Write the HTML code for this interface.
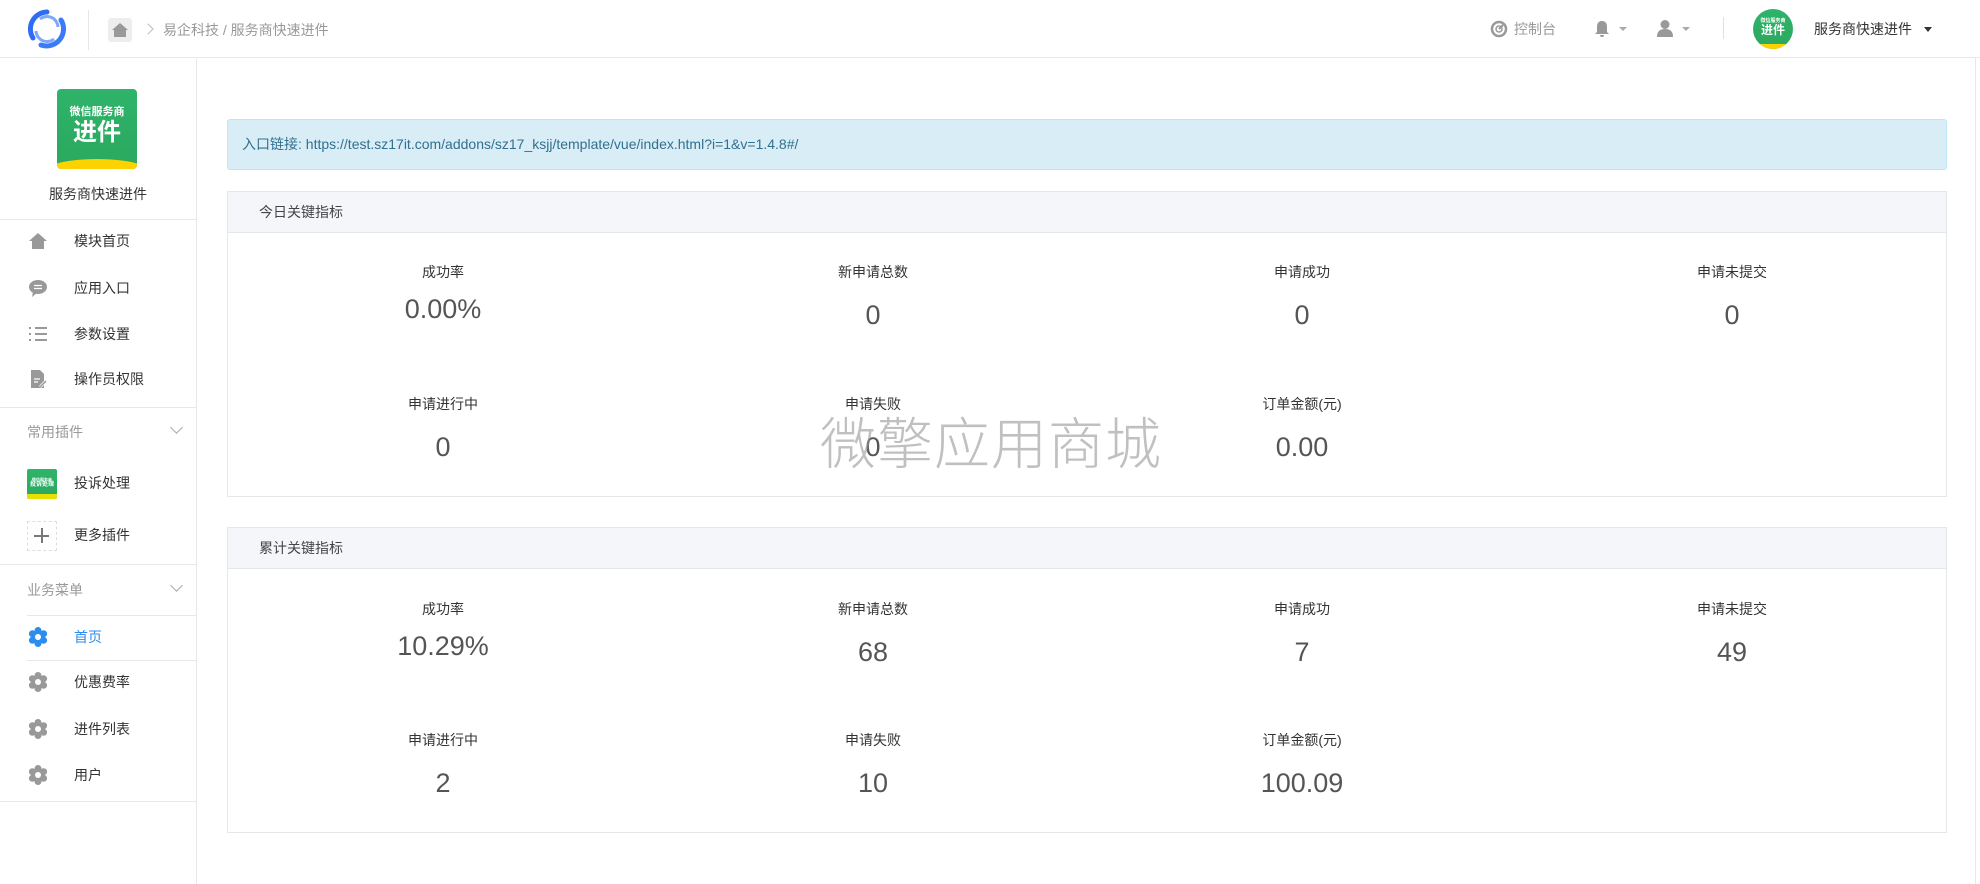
<!DOCTYPE html>
<html><head><meta charset="utf-8">
<style>
*{box-sizing:border-box;margin:0;padding:0}
body{width:1980px;height:884px;overflow:hidden;background:#fff;font-family:"Liberation Sans","Noto Sans CJK SC",sans-serif;color:#333;position:relative}
.abs{position:absolute}
.hdr{left:0;top:0;width:1980px;height:58px;border-bottom:1px solid #e8e8e8;background:#fff}
.side{left:0;top:59px;width:197px;height:825px;border-right:1px solid #e8e8e8}
.hl{position:absolute;height:1px;background:#e8e8e8}
.mi{position:absolute;left:0;width:196px;height:30px;font-size:14px;line-height:30px}
.mi .t{position:absolute;left:74px;top:0}
.mi svg{position:absolute;left:28px;top:5px}
.grp{position:absolute;left:27px;font-size:14px;color:#999}
.chev{position:absolute;left:172px;width:9px;height:9px;border-right:1px solid #aaa;border-bottom:1px solid #aaa;transform:rotate(45deg)}
.alert{left:227px;top:119px;width:1720px;height:51px;background:#d9edf7;border:1px solid #bce8f1;border-radius:3px;color:#31708f;font-size:14px;line-height:49px;padding-left:14px}
.panel{left:227px;width:1720px;border:1px solid #e5e6ea;background:#fff}
.ph{height:41px;background:#f5f6fa;border-bottom:1px solid #e5e6ea;font-size:14px;line-height:40px;padding-left:31px;color:#444}
.m{position:absolute;width:300px;margin-left:-150px;text-align:center}
.m .l{font-size:14px;color:#333;height:20px;line-height:20px}
.m .v{font-size:27px;color:#555;margin-top:16px;line-height:34px}
.badge{position:absolute;background:linear-gradient(#2fb36a,#2aa85e);color:#fff;text-align:center;font-weight:bold;overflow:hidden}
</style></head><body>

<div class="abs hdr">
  <svg class="abs" style="left:27px;top:9px" width="40" height="40" viewBox="0 0 40 40">
    <path d="M20 3 A17 17 0 0 0 6 29" stroke="#2f6df5" stroke-width="5" fill="none" stroke-linecap="round"/>
    <path d="M34 11 A17 17 0 0 1 14 36" stroke="#3b7bf7" stroke-width="5" fill="none" stroke-linecap="round"/>
    <path d="M13 10 A11 11 0 0 1 31 18" stroke="#7ea8fa" stroke-width="3" fill="none"/>
    <path d="M27 30 A11 11 0 0 1 9 22" stroke="#7ea8fa" stroke-width="3" fill="none"/>
  </svg>
  <div class="abs" style="left:88px;top:10px;width:1px;height:40px;background:#e6e6e6"></div>
  <div class="abs" style="left:108px;top:18px;width:24px;height:24px;background:#ededed;border-radius:3px"></div>
  <svg class="abs" style="left:111px;top:21px" width="18" height="18" viewBox="0 0 18 18"><path d="M9 2 L17 9 L15 9 L15 16 L3 16 L3 9 L1 9Z" fill="#999"/></svg>
  <div class="abs" style="left:144px;top:25px;width:8px;height:8px;border-top:1px solid #bbb;border-right:1px solid #bbb;transform:rotate(45deg)"></div>
  <div class="abs" style="left:163px;top:20px;font-size:14px;color:#999">易企科技 / 服务商快速进件</div>

  <svg class="abs" style="left:1490px;top:20px" width="18" height="18" viewBox="0 0 18 18"><circle cx="9" cy="9" r="7" stroke="#999" stroke-width="2.5" fill="none"/><circle cx="9" cy="9" r="3" stroke="#999" stroke-width="1.5" fill="none"/><path d="M9 9 L13 5" stroke="#999" stroke-width="2"/></svg>
  <div class="abs" style="left:1514px;top:19px;font-size:14px;color:#999">控制台</div>
  <svg class="abs" style="left:1594px;top:20px" width="16" height="18" viewBox="0 0 16 18"><path d="M8 1 C4 1 3 4 3 7 L3 12 L1 14 L15 14 L13 12 L13 7 C13 4 12 1 8 1Z M6 15 A2 2 0 0 0 10 15Z" fill="#999"/></svg>
  <div class="abs" style="left:1619px;top:27px;border-left:4px solid transparent;border-right:4px solid transparent;border-top:4px solid #aaa"></div>
  <svg class="abs" style="left:1656px;top:19px" width="18" height="19" viewBox="0 0 18 19"><circle cx="9" cy="5.5" r="4.5" fill="#999"/><path d="M1 18 C1 12 4 10 9 10 C14 10 17 12 17 18Z" fill="#999"/></svg>
  <div class="abs" style="left:1682px;top:27px;border-left:4px solid transparent;border-right:4px solid transparent;border-top:4px solid #aaa"></div>
  <div class="abs" style="left:1723px;top:17px;width:1px;height:22px;background:#e0e0e0"></div>
  <div class="badge" style="left:1753px;top:9px;width:40px;height:40px;border-radius:50%">
    <div style="font-size:5px;margin-top:9px;line-height:6px">微信服务商</div>
    <div style="font-size:12px;line-height:13px">进件</div>
    <div style="position:absolute;left:0;bottom:0;width:40px;height:5px;background:#fcd200"></div>
  </div>
  <div class="abs" style="left:1814px;top:19px;font-size:14px;color:#333">服务商快速进件</div>
  <div class="abs" style="left:1924px;top:27px;border-left:4.5px solid transparent;border-right:4.5px solid transparent;border-top:5px solid #333"></div>
</div>
<div class="abs" style="left:1975px;top:58px;width:1px;height:826px;background:#e8e8e8"></div>

<div class="abs side">
  <div class="badge" style="left:57px;top:30px;width:80px;height:80px;border-radius:4px">
    <div style="font-size:11px;margin-top:17px;line-height:13px">微信服务商</div>
    <div style="font-size:24px;line-height:28px">进件</div>
    <div style="position:absolute;left:-10px;bottom:-12px;width:100px;height:22px;border-radius:50%;background:#fcd200"></div>
  </div>
  <div class="abs" style="left:0;top:125px;width:196px;text-align:center;font-size:14px">服务商快速进件</div>
  <div class="hl" style="left:0;top:160px;width:196px"></div>

  <div class="mi" style="top:167px"><svg width="20" height="20" viewBox="0 0 20 20"><path d="M10 2 L19 10 L16 10 L16 18 L4 18 L4 10 L1 10Z" fill="#999"/></svg><span class="t">模块首页</span></div>
  <div class="mi" style="top:214px"><svg width="20" height="20" viewBox="0 0 20 20"><ellipse cx="10" cy="9" rx="9" ry="7" fill="#999"/><path d="M5 14 L4 19 L9 15Z" fill="#999"/><path d="M6 7.5 H14 M6 10.5 H14" stroke="#fff" stroke-width="1.3"/></svg><span class="t">应用入口</span></div>
  <div class="mi" style="top:260px"><svg width="20" height="20" viewBox="0 0 20 20"><path d="M1 4 H3 M7 4 H19 M1 10 H3 M7 10 H19 M1 16 H3 M7 16 H19" stroke="#999" stroke-width="2"/></svg><span class="t">参数设置</span></div>
  <div class="mi" style="top:305px"><svg width="20" height="20" viewBox="0 0 20 20"><path d="M3 1 H12 L16 5 L16 19 L3 19Z" fill="#999"/><path d="M6 10 H12 M6 13 H10" stroke="#fff" stroke-width="1.3"/><path d="M12 18 L18 12" stroke="#fff" stroke-width="3"/><path d="M12 18 L18 12" stroke="#999" stroke-width="1.5"/></svg><span class="t">操作员权限</span></div>
  <div class="hl" style="left:0;top:348px;width:196px"></div>

  <div class="grp" style="top:363px">常用插件</div><div class="chev" style="top:364px"></div>
  <div class="badge" style="left:27px;top:410px;width:30px;height:30px;border-radius:2px"><div style="font-size:4px;margin-top:8px;line-height:5px">微信服务商</div><div style="font-size:6px;line-height:7px">投诉处理</div><div style="position:absolute;left:0;bottom:0;width:30px;height:5px;background:#e8e000"></div></div>
  <div class="abs" style="left:74px;top:414px;font-size:14px">投诉处理</div>
  <div class="abs" style="left:27px;top:462px;width:30px;height:30px;border:1px dashed #ddd"></div>
  <div class="abs" style="left:34px;top:476px;width:15px;height:1.5px;background:#777"></div>
  <div class="abs" style="left:41px;top:469px;width:1.5px;height:15px;background:#777"></div>
  <div class="abs" style="left:74px;top:466px;font-size:14px">更多插件</div>
  <div class="hl" style="left:0;top:505px;width:196px"></div>

  <div class="grp" style="top:521px">业务菜单</div><div class="chev" style="top:522px"></div>
  <div class="hl" style="left:27px;top:556px;width:169px"></div>
  <div class="mi" style="top:563px;color:#2d8cf0"><svg width="20" height="20" viewBox="0 0 20 20"><g fill="#2d8cf0"><circle cx="10" cy="10" r="7"/><circle cx="10" cy="3.5" r="3.5"/><circle cx="10" cy="16.5" r="3.5"/><circle cx="4.4" cy="6.7" r="3.5"/><circle cx="15.6" cy="6.7" r="3.5"/><circle cx="4.4" cy="13.3" r="3.5"/><circle cx="15.6" cy="13.3" r="3.5"/></g><circle cx="10" cy="10" r="3" fill="#fff"/></svg><span class="t">首页</span></div>
  <div class="hl" style="left:27px;top:601px;width:169px"></div>
  <div class="mi" style="top:608px"><svg width="20" height="20" viewBox="0 0 20 20"><g fill="#999"><circle cx="10" cy="10" r="7"/><circle cx="10" cy="3.5" r="3.5"/><circle cx="10" cy="16.5" r="3.5"/><circle cx="4.4" cy="6.7" r="3.5"/><circle cx="15.6" cy="6.7" r="3.5"/><circle cx="4.4" cy="13.3" r="3.5"/><circle cx="15.6" cy="13.3" r="3.5"/></g><circle cx="10" cy="10" r="3" fill="#fff"/></svg><span class="t">优惠费率</span></div>
  <div class="mi" style="top:655px"><svg width="20" height="20" viewBox="0 0 20 20"><g fill="#999"><circle cx="10" cy="10" r="7"/><circle cx="10" cy="3.5" r="3.5"/><circle cx="10" cy="16.5" r="3.5"/><circle cx="4.4" cy="6.7" r="3.5"/><circle cx="15.6" cy="6.7" r="3.5"/><circle cx="4.4" cy="13.3" r="3.5"/><circle cx="15.6" cy="13.3" r="3.5"/></g><circle cx="10" cy="10" r="3" fill="#fff"/></svg><span class="t">进件列表</span></div>
  <div class="mi" style="top:701px"><svg width="20" height="20" viewBox="0 0 20 20"><g fill="#999"><circle cx="10" cy="10" r="7"/><circle cx="10" cy="3.5" r="3.5"/><circle cx="10" cy="16.5" r="3.5"/><circle cx="4.4" cy="6.7" r="3.5"/><circle cx="15.6" cy="6.7" r="3.5"/><circle cx="4.4" cy="13.3" r="3.5"/><circle cx="15.6" cy="13.3" r="3.5"/></g><circle cx="10" cy="10" r="3" fill="#fff"/></svg><span class="t">用户</span></div>
  <div class="hl" style="left:0;top:742px;width:196px"></div>
</div>

<div class="abs alert">入口链接: https://test.sz17it.com/addons/sz17_ksjj/template/vue/index.html?i=1&amp;v=1.4.8#/</div>

<div class="abs panel" style="top:191px;height:306px">
  <div class="ph">今日关键指标</div>
  <div class="m" style="left:215px;top:70px"><div class="l">成功率</div><div class="v" style="margin-top:10px">0.00%</div></div>
  <div class="m" style="left:645px;top:70px"><div class="l">新申请总数</div><div class="v">0</div></div>
  <div class="m" style="left:1074px;top:70px"><div class="l">申请成功</div><div class="v">0</div></div>
  <div class="m" style="left:1504px;top:70px"><div class="l">申请未提交</div><div class="v">0</div></div>
  <div class="m" style="left:215px;top:202px"><div class="l">申请进行中</div><div class="v">0</div></div>
  <div class="m" style="left:645px;top:202px"><div class="l">申请失败</div><div class="v">0</div></div>
  <div class="m" style="left:1074px;top:202px"><div class="l">订单金额(元)</div><div class="v">0.00</div></div>
</div>

<div class="abs panel" style="top:527px;height:306px">
  <div class="ph">累计关键指标</div>
  <div class="m" style="left:215px;top:71px"><div class="l">成功率</div><div class="v" style="margin-top:10px">10.29%</div></div>
  <div class="m" style="left:645px;top:71px"><div class="l">新申请总数</div><div class="v">68</div></div>
  <div class="m" style="left:1074px;top:71px"><div class="l">申请成功</div><div class="v">7</div></div>
  <div class="m" style="left:1504px;top:71px"><div class="l">申请未提交</div><div class="v">49</div></div>
  <div class="m" style="left:215px;top:202px"><div class="l">申请进行中</div><div class="v">2</div></div>
  <div class="m" style="left:645px;top:202px"><div class="l">申请失败</div><div class="v">10</div></div>
  <div class="m" style="left:1074px;top:202px"><div class="l">订单金额(元)</div><div class="v">100.09</div></div>
</div>

<div class="abs" style="left:820px;top:408px;font-size:56px;line-height:66px;color:rgba(150,150,150,0.6);font-family:'Noto Sans CJK SC',sans-serif;font-weight:300;letter-spacing:1px">微擎应用商城</div>
</body></html>
